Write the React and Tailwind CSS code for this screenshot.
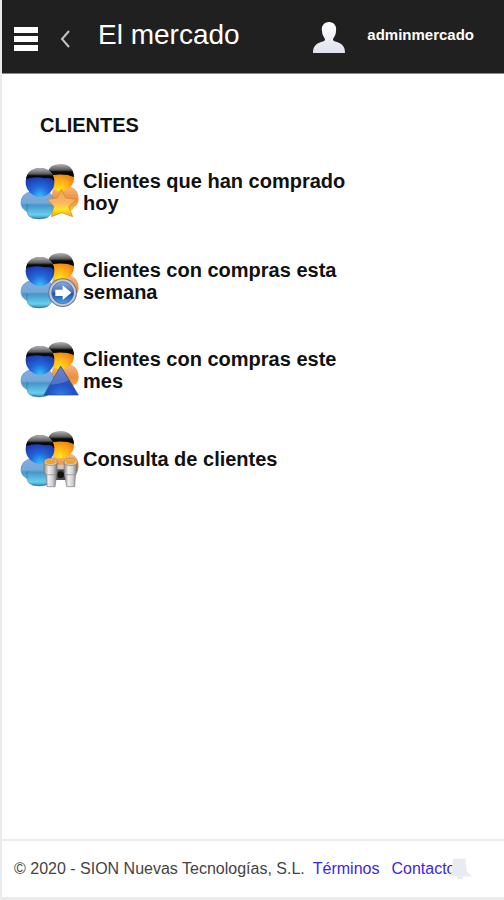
const clientLinks = [
    { id: "today", label: "Clientes que han comprado hoy", badge: "star" },
    { id: "week", label: "Clientes con compras esta semana", badge: "arrow" },
    { id: "month", label: "Clientes con compras este mes", badge: "triangle" },
    { id: "search", label: "Consulta de clientes", badge: "binoculars" },
];

// Gradients shared by all of the client icons
const IconDefs = () => (
    <svg className="absolute h-0 w-0" aria-hidden="true">
        <defs>
            <linearGradient id="hair" x1="0" y1="0" x2="0" y2="1">
                <stop offset="0" stopColor="#b5b5b5" />
                <stop offset="0.45" stopColor="#5c5c5c" />
                <stop offset="0.6" stopColor="#0a0a0a" />
                <stop offset="1" stopColor="#000000" />
            </linearGradient>
            <radialGradient id="blueHead" cx="0.5" cy="0.98" r="0.75">
                <stop offset="0" stopColor="#34c0fa" />
                <stop offset="0.45" stopColor="#2268dc" />
                <stop offset="1" stopColor="#1c34a8" />
            </radialGradient>
            <radialGradient id="orangeHead" cx="0.45" cy="0.95" r="0.85">
                <stop offset="0" stopColor="#ffe818" />
                <stop offset="0.45" stopColor="#ffab18" />
                <stop offset="1" stopColor="#dc6508" />
            </radialGradient>
            <linearGradient id="blueBody" x1="0" y1="0" x2="0" y2="1">
                <stop offset="0" stopColor="#86a9dc" />
                <stop offset="0.4" stopColor="#74a9da" />
                <stop offset="0.5" stopColor="#4795ca" />
                <stop offset="0.85" stopColor="#66d0ee" />
                <stop offset="1" stopColor="#3c8fb8" />
            </linearGradient>
            <linearGradient id="orangeBody" x1="0" y1="0" x2="0" y2="1">
                <stop offset="0" stopColor="#f5b98a" />
                <stop offset="0.5" stopColor="#ef8d3c" />
                <stop offset="1" stopColor="#ffc83c" />
            </linearGradient>
            <linearGradient id="starFill" x1="0" y1="0" x2="0" y2="1">
                <stop offset="0" stopColor="#f3a04c" />
                <stop offset="0.5" stopColor="#f9b768" />
                <stop offset="0.75" stopColor="#ffe61e" />
                <stop offset="1" stopColor="#f2a31c" />
            </linearGradient>
            <linearGradient id="discFill" x1="0" y1="0" x2="0" y2="1">
                <stop offset="0" stopColor="#8fa8d6" />
                <stop offset="0.45" stopColor="#4a76be" />
                <stop offset="0.55" stopColor="#1f54ab" />
                <stop offset="1" stopColor="#49a5e8" />
            </linearGradient>
            <radialGradient id="triangleFill" cx="0.5" cy="1" r="0.8">
                <stop offset="0" stopColor="#2b80ea" />
                <stop offset="0.5" stopColor="#2450c0" />
                <stop offset="1" stopColor="#4c66b8" />
            </radialGradient>
            <linearGradient id="tubeFill" x1="0" y1="0" x2="1" y2="0">
                <stop offset="0" stopColor="#8a8a8a" />
                <stop offset="0.35" stopColor="#efefef" />
                <stop offset="0.65" stopColor="#cfcfcf" />
                <stop offset="1" stopColor="#6e6e6e" />
            </linearGradient>
            <linearGradient id="userFill" x1="0" y1="0" x2="0" y2="1">
                <stop offset="0" stopColor="#ffffff" />
                <stop offset="1" stopColor="#dfe1ee" />
            </linearGradient>
        </defs>
    </svg>
);

const Badge = ({ type }) => {
    if (type === "star") {
        return (
            <path
                d="M154 102 L167 129 L199 133 L176 154 L188 185 L156 173 L124 185 L132 154 L112 133 L142 129 Z"
                fill="url(#starFill)"
                stroke="#d98424"
                strokeWidth="2"
                strokeLinejoin="round"
            />
        );
    }
    if (type === "arrow") {
        return (
            <g>
                <circle cx="158" cy="146" r="43" fill="#6f7480" />
                <circle cx="158" cy="146" r="40" fill="#c3c9d6" />
                <circle cx="158" cy="146" r="33" fill="url(#discFill)" stroke="#3f5f9c" strokeWidth="2" />
                <path d="M136 137 H158 V124 L184 146 L158 168 V156 H136 Z" fill="#ffffff" />
            </g>
        );
    }
    if (type === "triangle") {
        return (
            <g>
                <path d="M152 99 L205 186 H102 Z" fill="url(#triangleFill)" stroke="#2848a0" strokeWidth="2" />
                <path d="M152 102 L176 142 Q150 156 120 154 Z" fill="#8fa2d8" opacity="0.4" />
            </g>
        );
    }
    return (
        <g>
            <path d="M136 132 H168 V174 H136 Z" fill="#4a4a4a" />
            <path d="M138 128 H166 V142 H138 Z" fill="#c4c4c4" />
            <circle cx="152" cy="158" r="10" fill="#111111" />
            <path d="M102 120 H142 L141 152 L135 194 H111 L109 162 L102 146 Z" fill="url(#tubeFill)" stroke="#808080" strokeWidth="2" />
            <path d="M162 120 H202 L202 146 L196 162 L194 194 H170 L163 152 Z" fill="url(#tubeFill)" stroke="#808080" strokeWidth="2" />
            <path d="M108 158 L136 158 M168 158 L196 158" stroke="#8c8c8c" strokeWidth="2" />
            <ellipse cx="122" cy="120" rx="20" ry="11" fill="#d4c8b0" stroke="#8f8672" strokeWidth="2" />
            <ellipse cx="182" cy="120" rx="20" ry="11" fill="#d4c8b0" stroke="#8f8672" strokeWidth="2" />
            <ellipse cx="122" cy="119" rx="15" ry="7" fill="#f3a22c" />
            <ellipse cx="182" cy="119" rx="15" ry="7" fill="#f3a22c" />
        </g>
    );
};

const ClientsIcon = ({ badge }) => (
    <svg viewBox="30 21 180 180" className="h-15 w-15 shrink-0" aria-hidden="true">
        <path
            d="M128 104 Q150 90 182 94 Q207 106 206 134 Q204 152 192 155 Q188 172 160 174 Q130 174 120 160 Z"
            fill="url(#orangeBody)"
        />
        <circle cx="152" cy="69" r="40" fill="url(#orangeHead)" />
        <path d="M114 56 Q114 28 153 27 Q190 28 192 66 Q168 56 130 60 Q122 55 114 56 Z" fill="url(#hair)" />
        <path
            d="M62 110 Q90 122 114 110 Q131 120 131 142 Q131 184 104 190 Q86 194 68 189 Q52 184 51 169 Q33 162 33 142 Q34 117 62 110 Z"
            fill="url(#blueBody)"
            stroke="#5a8fb8"
            strokeWidth="2"
        />
        <path d="M51 169 Q49 156 53 147 M66 188 Q90 194 112 187" fill="none" stroke="#2f6f98" strokeWidth="2" />
        <circle cx="90" cy="82" r="43" fill="url(#blueHead)" />
        <path d="M48 72 Q52 40 91 39 Q130 40 133 78 Q124 66 104 70 Q76 62 48 72 Z" fill="url(#hair)" />
        <Badge type={badge} />
    </svg>
);

const Header = () => (
    <header className="flex h-[74px] items-center border-b border-[#8a8a8a] bg-[#202020] text-white">
        <button type="button" aria-label="Menú" className="ml-3 flex w-6 flex-col gap-[3px] pt-1">
            <span className="h-1.5 w-full bg-white" />
            <span className="h-1.5 w-full bg-white" />
            <span className="h-1.5 w-full bg-white" />
        </button>
        <button type="button" aria-label="Volver" className="ml-5 pt-1">
            <svg viewBox="0 0 14 20" className="h-5 w-3.5" aria-hidden="true">
                <path d="M11 2 L4 10 L11 18" fill="none" stroke="#c4c4c4" strokeWidth="2" />
            </svg>
        </button>
        <h1 className="ml-[26px] pb-1 text-[28px] leading-8">El mercado</h1>
        <button type="button" className="mr-[30px] ml-auto flex items-center gap-[22px]">
            <svg viewBox="0 0 32 32" className="h-8 w-8" aria-hidden="true">
                <path
                    d="M16 1 C11 1 8 5 9 10 C9 14 11 16 12 18 C12 20 11 20 8 21 C3 23 0 25 0 32 H32 C32 25 29 23 24 21 C21 20 20 20 20 18 C21 16 23 14 23 10 C24 5 21 1 16 1 Z"
                    fill="url(#userFill)"
                />
            </svg>
            <span className="pb-1 text-[15px] leading-5 font-bold">adminmercado</span>
        </button>
    </header>
);

const Footer = () => (
    <footer className="flex items-center border-t-2 border-[#ebebeb] px-3 py-4 text-base leading-6 whitespace-nowrap text-[#444444]">
        <p>© 2020 - SION Nuevas Tecnologías, S.L.</p>
        <nav className="ml-2 flex gap-3 text-[#3d25e6]">
            <a href="#terminos">Términos</a>
            <span className="relative">
                <a href="#contacto">Contacto</a>
                {/* Notification bell floats over the end of the link */}
                <svg viewBox="0 0 26 26" className="absolute top-0 -right-4 h-6 w-6" aria-hidden="true">
                    <path d="M5 2 H19 L20 15 L26 21 H0 L4 17 Z" fill="#e9ebf3" />
                    <path d="M10 21 H16 V24 H10 Z" fill="#e9ebf3" />
                </svg>
            </span>
        </nav>
    </footer>
);

const App = () => {
    return (
        <div className="flex min-h-screen flex-col border-b-3 border-l-2 border-[#ebebeb] bg-white font-['Liberation_Sans',Arial,sans-serif]">
            <IconDefs />
            <Header />
            <main className="flex-1 px-[18px] pt-10 pb-8 text-[#111111]">
                <h2 className="ml-5 text-xl leading-[22px] font-bold">CLIENTES</h2>
                <ul className="mt-[26px] flex flex-col gap-[29px]">
                    {clientLinks.map((item) => (
                        <li key={item.id}>
                            <a href={`#${item.id}`} className="flex items-center gap-[3px]">
                                <ClientsIcon badge={item.badge} />
                                <span className="max-w-72 text-xl leading-[22px] font-bold">{item.label}</span>
                            </a>
                        </li>
                    ))}
                </ul>
            </main>
            <Footer />
        </div>
    );
};

export default App;
